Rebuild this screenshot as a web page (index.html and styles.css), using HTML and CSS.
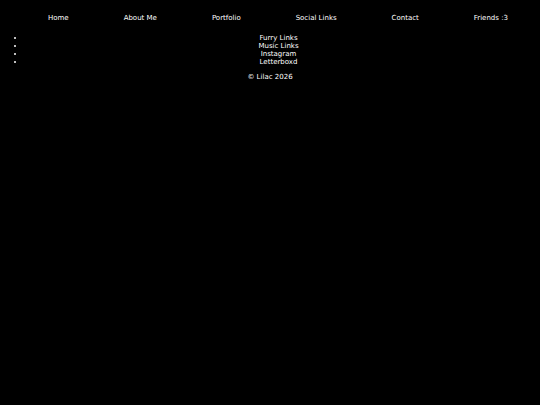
FILE: index.html
```html
<!DOCTYPE html>
<html>
<head>
<meta charset="utf-8">
<link rel="stylesheet" href="styles.css">
</head>
<body>
<nav class="nav">
  <a class="nav-link" href="#">Home</a>
  <a class="nav-link" href="#">About Me</a>
  <a class="nav-link" href="#">Portfolio</a>
  <a class="nav-link" href="#">Social Links</a>
  <a class="nav-link" href="#">Contact</a>
  <a class="nav-link" href="#">Friends :3</a>
</nav>
<ul class="links">
  <li>Furry Links</li>
  <li>Music Links</li>
  <li>Instagram</li>
  <li>Letterboxd</li>
</ul>
<footer class="footer">© Lilac 2026</footer>
</body>
</html>
```
FILE: styles.css
```css
html, body {
  background: #000;
}
body {
  margin: 8px;
  color: #fff;
  font-family: "DejaVu Sans", Verdana, sans-serif;
  font-size: 7px;
}
.nav {
  display: flex;
  justify-content: space-around;
  padding: 5.5px 0 4.5px 12.5px;
  margin-right: -3.5px;
}
.nav-link {
  color: #fff;
  text-decoration: none;
}
.links {
  margin: 8px 0 0 0;
  padding-left: 17px;
  text-align: center;
  line-height: 8px;
}
.footer {
  text-align: center;
  margin-top: 7px;
}
```
